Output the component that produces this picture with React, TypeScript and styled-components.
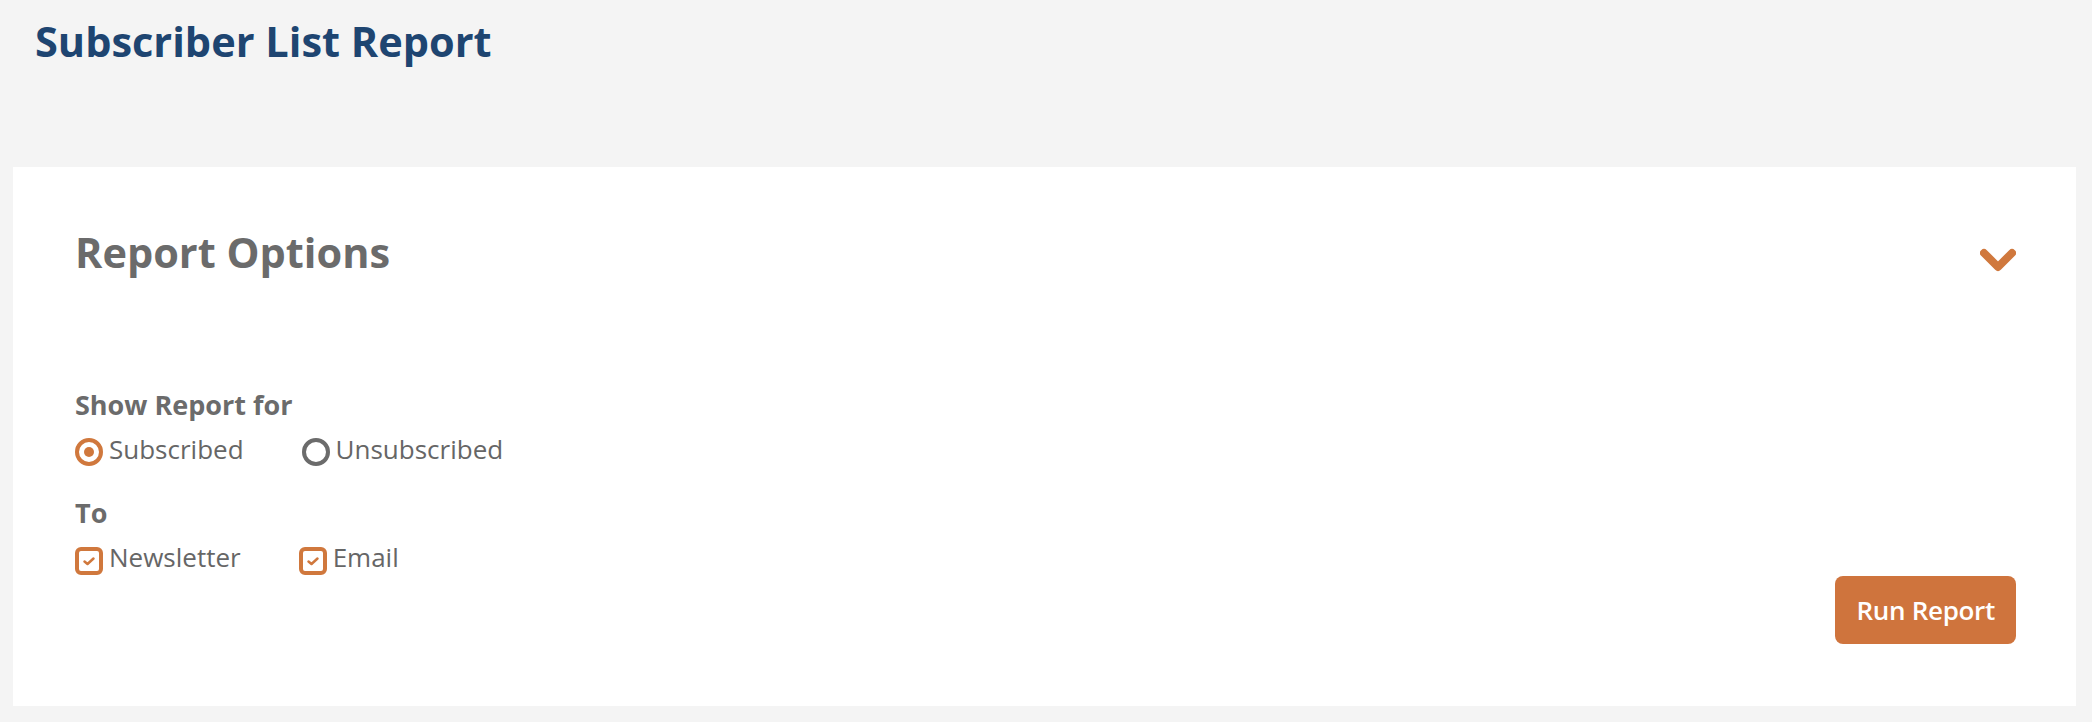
import React, { useState } from "react";
import styled, { createGlobalStyle } from "styled-components";

const ORANGE = "#d0783d";
const GREY = "#6b6b6b";

const GlobalStyle = createGlobalStyle`
  body {
    margin: 0;
    background: #f4f4f4;
    font-family: "Open Sans", "Noto Sans", sans-serif;
  }
`;

const Page = styled.div`
  padding-bottom: 17px;
`;

const PageTitle = styled.h1`
  margin: 0;
  padding: 17px 0 0 35px;
  font: 700 41.5px/48px "Open Sans", "Noto Sans", sans-serif;
  color: #1e4571;
`;

const Card = styled.section`
  margin: 102px 16px 0 13px;
  padding: 60px 60px 62px 62px;
  background: #fff;
`;

const CardHeader = styled.div`
  display: flex;
  justify-content: space-between;
  align-items: flex-start;
`;

const CardTitle = styled.h2`
  margin: 0;
  font: 700 41.5px/50px "Open Sans", "Noto Sans", sans-serif;
  color: ${GREY};
`;

const Toggle = styled.button`
  margin-top: 21px;
  padding: 0;
  border: 0;
  background: none;
  cursor: pointer;
  display: flex;
`;

const CardBody = styled.div`
  display: flex;
  justify-content: space-between;
  align-items: flex-end;
  margin-top: 110px;
`;

const Options = styled.div`
  margin-bottom: 69px;
`;

const Group = styled.fieldset`
  margin: 0;
  padding: 0;
  border: 0;
  & + & {
    margin-top: 28px;
  }
`;

const GroupLabel = styled.legend`
  padding: 0;
  margin-bottom: 8px;
  font: 700 27px/36px "Open Sans", sans-serif;
  color: ${GREY};
`;

const ChoiceRow = styled.div`
  display: flex;
  gap: 58px;
`;

const Choice = styled.label`
  display: flex;
  align-items: center;
  gap: 6px;
  font: 400 26px/36px "Open Sans", sans-serif;
  color: #666;
  cursor: pointer;

  input {
    position: absolute;
    opacity: 0;
    width: 0;
    height: 0;
  }
`;

const RadioMark = styled.span<{ $on: boolean }>`
  box-sizing: border-box;
  width: 28px;
  height: 28px;
  margin-top: 6px;
  border-radius: 50%;
  border: 4px solid ${(p) => (p.$on ? ORANGE : GREY)};
  display: flex;
  align-items: center;
  justify-content: center;

  &::after {
    content: "";
    width: 10px;
    height: 10px;
    border-radius: 50%;
    background: ${(p) => (p.$on ? ORANGE : "transparent")};
  }
`;

const CheckMark = styled.span<{ $on: boolean }>`
  box-sizing: border-box;
  width: 28px;
  height: 28px;
  margin-top: 7px;
  border-radius: 6px;
  border: 4px solid ${ORANGE};
  display: flex;
  align-items: center;
  justify-content: center;

  svg {
    visibility: ${(p) => (p.$on ? "visible" : "hidden")};
  }
`;

const RunButton = styled.button`
  height: 68px;
  padding: 0 21px;
  border: 0;
  border-radius: 8px;
  background: #cf743d;
  color: #fff;
  font: 600 26px "Open Sans", sans-serif;
  letter-spacing: -0.3px;
  cursor: pointer;
`;

function Chevron() {
  return (
    <svg width="36" height="24" viewBox="0 0 36 24">
      <polyline
        points="4,5 18,19 32,5"
        fill="none"
        stroke={ORANGE}
        strokeWidth="8"
        strokeLinecap="round"
        strokeLinejoin="round"
      />
    </svg>
  );
}

function Tick() {
  return (
    <svg width="14" height="12" viewBox="0 0 14 12">
      <polyline
        points="2.5,6.5 5.5,9 11.5,3.5"
        fill="none"
        stroke={ORANGE}
        strokeWidth="2.5"
        strokeLinecap="round"
        strokeLinejoin="round"
      />
    </svg>
  );
}

function App() {
  const [status, setStatus] = useState("subscribed");
  const [targets, setTargets] = useState({ newsletter: true, email: true });

  const toggleTarget = (key: "newsletter" | "email") => {
    setTargets({ ...targets, [key]: !targets[key] });
  };

  return (
    <Page>
      <GlobalStyle />
      <PageTitle>Subscriber List Report</PageTitle>
      <Card>
        <CardHeader>
          <CardTitle>Report Options</CardTitle>
          <Toggle aria-label="Collapse">
            <Chevron />
          </Toggle>
        </CardHeader>
        <CardBody>
          <Options>
            <Group>
              <GroupLabel>Show Report for</GroupLabel>
              <ChoiceRow>
                <Choice>
                  <input type="radio" checked={status === "subscribed"} onChange={() => setStatus("subscribed")} />
                  <RadioMark $on={status === "subscribed"} />
                  Subscribed
                </Choice>
                <Choice>
                  <input type="radio" checked={status === "unsubscribed"} onChange={() => setStatus("unsubscribed")} />
                  <RadioMark $on={status === "unsubscribed"} />
                  Unsubscribed
                </Choice>
              </ChoiceRow>
            </Group>
            <Group>
              <GroupLabel>To</GroupLabel>
              <ChoiceRow>
                <Choice>
                  <input type="checkbox" checked={targets.newsletter} onChange={() => toggleTarget("newsletter")} />
                  <CheckMark $on={targets.newsletter}>
                    <Tick />
                  </CheckMark>
                  Newsletter
                </Choice>
                <Choice>
                  <input type="checkbox" checked={targets.email} onChange={() => toggleTarget("email")} />
                  <CheckMark $on={targets.email}>
                    <Tick />
                  </CheckMark>
                  Email
                </Choice>
              </ChoiceRow>
            </Group>
          </Options>
          <RunButton>Run Report</RunButton>
        </CardBody>
      </Card>
    </Page>
  );
}

export default App;
